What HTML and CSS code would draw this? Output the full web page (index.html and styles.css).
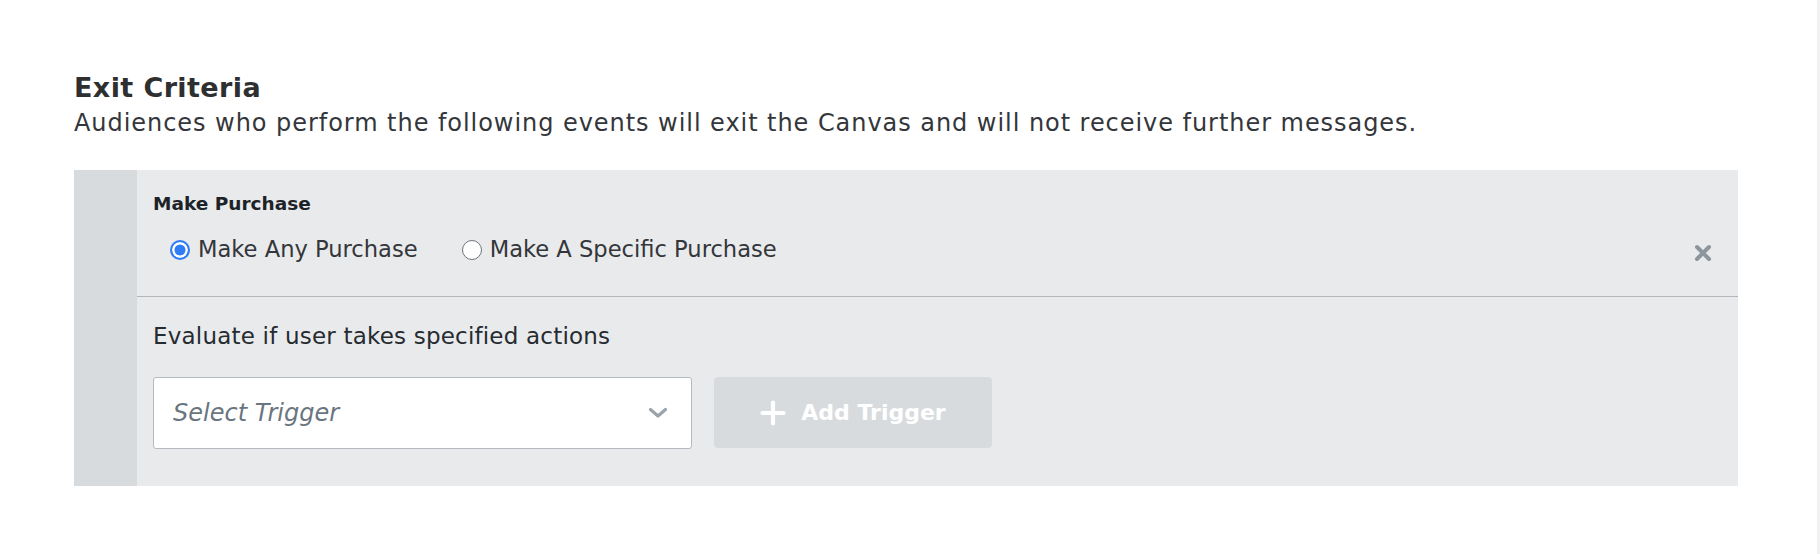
FILE: index.html
```html
<!DOCTYPE html>
<html lang="en">
<head>
<meta charset="utf-8">
<title>Exit Criteria</title>
<link rel="stylesheet" href="styles.css">
</head>
<body>
<div class="layout">
  <main class="main">
    <section class="exit">
      <h2 class="exit-title">Exit Criteria</h2>
      <p class="exit-desc">Audiences who perform the following events will exit the Canvas and will not receive further messages.</p>
      <div class="panel">
        <div class="panel-strip"></div>
        <div class="panel-body">
          <div class="event">
            <div class="event-main">
              <div class="event-name">Make Purchase</div>
              <div class="radios">
                <label class="radio"><span class="radio-dot checked"></span>Make Any Purchase</label>
                <label class="radio"><span class="radio-dot"></span>Make A Specific Purchase</label>
              </div>
            </div>
            <button class="close" aria-label="Remove">
              <svg width="18" height="18" viewBox="0 0 18 18"><path d="M3 3L15 15M15 3L3 15" stroke="#8c969e" stroke-width="4" stroke-linecap="round"/></svg>
            </button>
          </div>
          <div class="evaluate">
            <div class="evaluate-label">Evaluate if user takes specified actions</div>
            <div class="trigger-row">
              <div class="select">
                <span class="select-placeholder">Select Trigger</span>
                <svg class="chevron" width="20" height="12" viewBox="0 0 20 12"><path d="M2.5 2.5L10 9L17.5 2.5" fill="none" stroke="#9ba4ab" stroke-width="3.2" stroke-linecap="round" stroke-linejoin="round"/></svg>
              </div>
              <button class="add-btn">
                <svg width="26" height="26" viewBox="0 0 26 26"><path d="M13 2.5V23.5M2.5 13H23.5" stroke="#fff" stroke-width="4.2" stroke-linecap="round"/></svg>
                <span>Add Trigger</span>
              </button>
            </div>
          </div>
        </div>
      </div>
    </section>
  </main>
  <div class="scrolltrack"></div>
</div>
</body>
</html>
```

FILE: styles.css
```css
* { box-sizing: border-box; }
html, body { margin: 0; padding: 0; background: #ffffff; }
body {
  font-family: "DejaVu Sans", "Liberation Sans", sans-serif;
  color: #2e3033;
}
.layout {
  display: flex;
  height: 554px;
}
.main {
  flex: 1;
  padding: 72px 79px 0 74px;
}
.scrolltrack {
  width: 3px;
  background: #f1f1f2;
}
.exit-title {
  margin: 0;
  font-size: 27px;
  line-height: 31px;
  font-weight: 700;
  letter-spacing: 0.4px;
  color: #2e2f31;
}
.exit-desc {
  margin: 6px 0 0;
  font-size: 24px;
  line-height: 28px;
  letter-spacing: 0.95px;
  color: #33363a;
}
.panel {
  margin-top: 33px;
  display: flex;
  background: #e9eaec;
  height: 316px;
}
.panel-strip {
  width: 63px;
  background: #d8dbde;
}
.panel-body {
  flex: 1;
  display: flex;
  flex-direction: column;
}
.event {
  display: flex;
  justify-content: space-between;
  align-items: flex-start;
  padding: 21px 26px 0 16px;
  height: 127px;
  border-bottom: 1px solid #b3b7bb;
}
.event-name {
  font-size: 18.5px;
  line-height: 25px;
  font-weight: 700;
  color: #1c2227;
}
.radios {
  display: flex;
  gap: 44px;
  margin-top: 20px;
  padding-left: 17px;
}
.radio {
  display: flex;
  align-items: center;
  gap: 8px;
  font-size: 22.6px;
  line-height: 27px;
  color: #33363a;
}
.radio-dot {
  width: 20px;
  height: 20px;
  border-radius: 50%;
  border: 1.5px solid #6f7378;
  background: #fff;
  display: inline-block;
}
.radio-dot.checked {
  border: 2px solid #2f7cf6;
  background: #2f7cf6;
  box-shadow: inset 0 0 0 2.5px #fff;
}
.close {
  margin-top: 53px;
  border: 0;
  background: none;
  padding: 0;
  width: 18px;
  height: 18px;
  display: flex;
}
.evaluate {
  padding: 26px 0 0 16px;
}
.evaluate-label {
  font-size: 23px;
  line-height: 26px;
  letter-spacing: 0.2px;
  color: #262b30;
}
.trigger-row {
  display: flex;
  gap: 22px;
  margin-top: 28px;
}
.select {
  width: 539px;
  height: 72px;
  background: #fff;
  border: 1px solid #b4babf;
  border-radius: 3px;
  display: flex;
  align-items: center;
  justify-content: space-between;
  padding: 0 23px 0 19px;
}
.select-placeholder {
  font-size: 24px;
  font-style: italic;
  color: #6a7580;
}
.add-btn {
  width: 278px;
  height: 71px;
  border: 0;
  border-radius: 4px;
  background: #d8dbde;
  display: flex;
  align-items: center;
  justify-content: center;
  gap: 15px;
  font-family: inherit;
  font-size: 22px;
  font-weight: 700;
  color: #ffffff;
  padding: 0;
}
```
